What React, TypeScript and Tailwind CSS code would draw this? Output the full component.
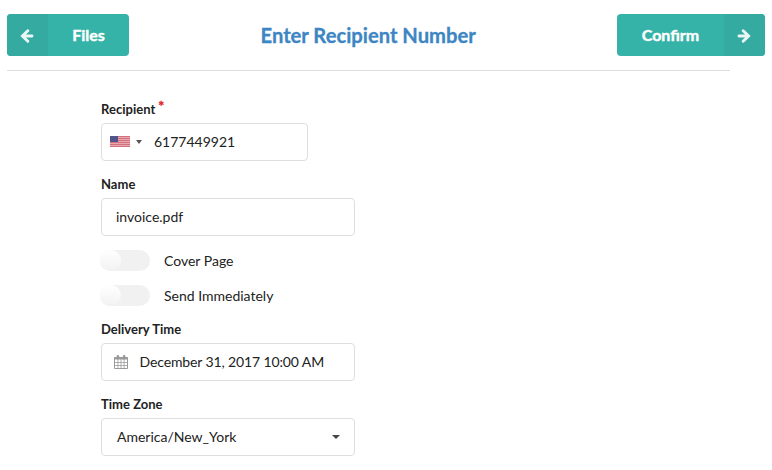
import React from 'react';

const stripes = [0, 2, 4, 6, 8, 10];

function Flag() {
  return (
    <svg width="20" height="11" viewBox="0 0 20 11" className="-mt-px shrink-0">
      <rect width="20" height="11" fill="#e8a8b0" />
      {stripes.map((y) => (
        <rect key={y} y={y} width="20" height="1" fill="#d4707d" />
      ))}
      <rect width="8" height="6" fill="#53548a" />
    </svg>
  );
}

function Arrow({ right = false }: { right?: boolean }) {
  return (
    <svg width="14" height="14" viewBox="0 0 14 14" fill="none" stroke="#ebf6f5" strokeWidth="2.9" className={right ? 'mt-[2px] mr-px rotate-180' : 'mt-[2px] mr-px'}>
      <path d="M7.8 1.7 2.4 7l5.4 5.3M2.6 7H12" strokeLinejoin="miter" strokeLinecap="round" />
    </svg>
  );
}

function CalendarIcon() {
  return (
    <svg width="14" height="14" viewBox="0 0 14 14" fill="none" stroke="#9a9a9a" className="shrink-0">
      <path d="M.5 2.5h13v11H.5z" />
      <path d="M.5 3.3h13" strokeWidth="2.4" />
      <path d="M.5 7.5h13M.5 10.5h13M3.9 4v9M7 4v9M10.1 4v9" strokeWidth=".75" />
      <path d="M3.9 1.4v1.9M10.1 1.4v1.9" strokeWidth="2.6" strokeLinecap="round" />
    </svg>
  );
}

function Toggle({ label }: { label: string }) {
  return (
    <div className="-ml-px flex h-[21px] items-center">
      <span className="h-[21px] w-[50px] rounded-full bg-[#f1f1f1]">
        <span className="block size-[21px] rounded-full bg-gradient-to-b from-white to-[#f2f2f2]" />
      </span>
      <span className="ml-[14px] text-[14px] leading-[21px]">{label}</span>
    </div>
  );
}

function Label({ children }: { children: React.ReactNode }) {
  return <div className="mb-[5px] flex h-[17px] text-[13px] leading-[17px] font-bold tracking-[0.02px]">{children}</div>;
}

export default function App() {
  return (
    <div className="h-[470px] w-[772px] overflow-hidden bg-white pt-[14px] font-['Lato',sans-serif] text-[#222222]">
      <header className="mx-[7px] flex h-[42px] text-[16px] font-bold text-white">
        <button className="flex w-[122px] overflow-hidden rounded bg-[#35b3a8]">
          <span className="flex h-full w-[41px] items-center justify-center bg-[#35aaa0]"><Arrow /></span>
          <span className="flex h-full flex-1 items-center justify-center [-webkit-text-stroke:0.4px_white]">Files</span>
        </button>
        <h1 className="ml-[131.5px] text-[20.2px] leading-[42px] whitespace-nowrap text-[#3d86c3] [-webkit-text-stroke:0.3px_#3d86c3]">Enter Recipient Number</h1>
        <button className="ml-auto flex w-[148px] overflow-hidden rounded bg-[#35b3a8]">
          <span className="flex h-full flex-1 items-center justify-center [-webkit-text-stroke:0.4px_white]">Confirm</span>
          <span className="flex h-full w-[41px] items-center justify-center bg-[#35aaa0]"><Arrow right /></span>
        </button>
      </header>
      <div className="mt-[14px] ml-[7px] h-px w-[723px] bg-[#dddddd]" />
      <main className="mt-[30px] ml-[101px] w-[254px] text-[14px]">
        <Label>Recipient<span className="-mt-[4px] ml-[3px] text-[14px] text-[#e8202a] [-webkit-text-stroke:0.4px_#e8202a]">*</span></Label>
        <div className="flex h-[38px] w-[207px] items-center rounded border border-[#dedede] pl-2">
          <Flag />
          <span className="ml-[6px] border-x-[3px] border-t-4 border-x-transparent border-t-[#555555]" />
          <span className="-mt-[2px] ml-3">6177449921</span>
        </div>
        <div className="mt-[15px]"><Label>Name</Label></div>
        <div className="flex h-[38px] items-center rounded border border-[#dedede] pb-px pl-[14px]">invoice.pdf</div>
        <div className="mt-[14px] flex flex-col gap-[14px]"><Toggle label="Cover Page" /><Toggle label="Send Immediately" /></div>
        <div className="mt-[15px]"><Label>Delivery Time</Label></div>
        <div className="flex h-[38px] items-center rounded border border-[#dedede] pl-3"><CalendarIcon /><span className="-mt-px ml-[11.5px] tracking-[-0.12px]">December 31, 2017 10:00 AM</span></div>
        <div className="mt-[15px]"><Label>Time Zone</Label></div>
        <div className="flex h-[38px] items-center justify-between rounded border border-[#dedede] pr-[14px] pb-px pl-[15px]">America/New_York<span className="mt-px border-x-4 border-t-4 border-x-transparent border-t-[#444444]" /></div>
      </main>
    </div>
  );
}
